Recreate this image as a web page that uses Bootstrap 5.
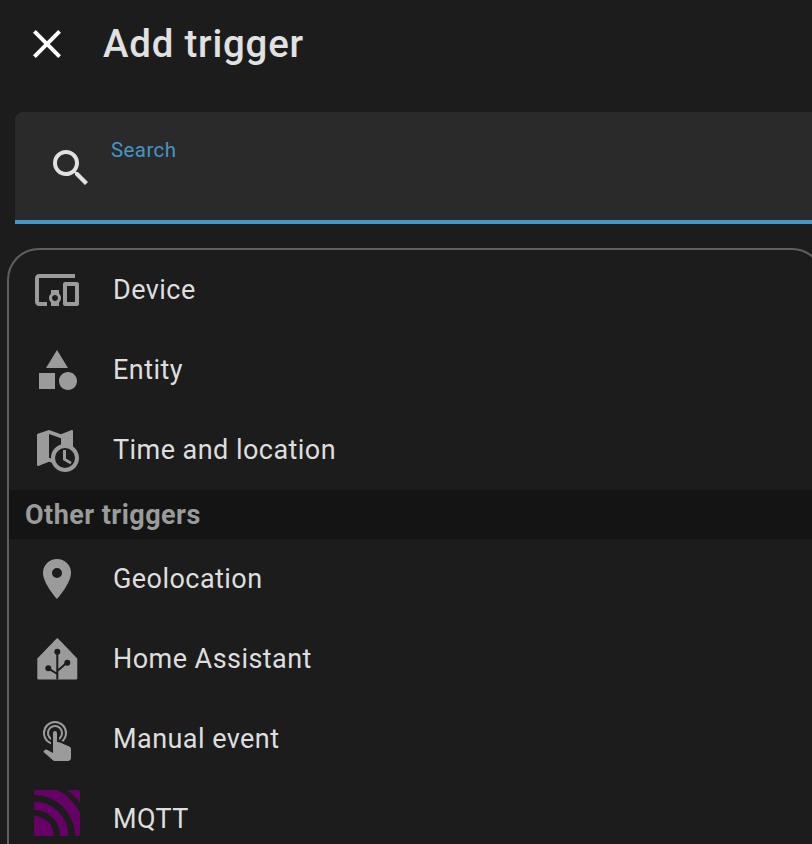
<!DOCTYPE html>
<html lang="en"><head><meta charset="utf-8"><title>Add trigger</title>
<link rel="stylesheet" href="https://cdn.jsdelivr.net/npm/bootstrap@5.3.0/dist/css/bootstrap.min.css">
<style>
html,body{height:844px;overflow:hidden;background:#1c1c1c;font-family:Roboto,"Liberation Sans",sans-serif;color:#e1e1e1}
.dlg-head{height:88px;padding-left:23px;gap:32px}
.dlg-head svg{fill:#fff}
.dlg-title{font-size:38.4px;font-weight:500;color:#e1e1e1;margin:0;line-height:48px;letter-spacing:.8px}
.searchbox{margin:24px -8px 0 15px;height:111.5px;background:#2a2a2a;border-bottom:4px solid #4298cc;border-radius:8px 8px 0 0;padding-left:32px}
.searchbox svg{fill:#e1e1e1;margin-top:32px}
.searchlabel{color:#4596c5;font-size:20.5px;line-height:24px;margin:26px 0 0 16px;letter-spacing:.4px}
.pick-card{margin:24.5px -12px 0 7px;background:#1c1c1c;border:2px solid #5f5f5f;border-radius:32px 32px 0 0;overflow:hidden;height:700px}
.pick-row{background:transparent;border:0;color:#dedede;height:80px;padding:0 0 0 24px;gap:32px;font-size:27px;letter-spacing:.45px}
.pick-row svg{fill:#9b9b9b;flex:none}
.pick-head{background:#141414;color:#9b9b9b;font-size:27px;font-weight:700;height:49px;line-height:49px;padding:1px 0 0 16px;letter-spacing:.45px}
.mqtt-mark{margin-bottom:12px}
.ha-tree{fill:none;stroke:#1c1c1c;stroke-width:2}
.ha-knot{fill:#1c1c1c}
.ha-house{stroke:#9b9b9b;stroke-width:2;stroke-linejoin:round}
</style></head><body>
<header class="dlg-head d-flex align-items-center">
<svg width="48" height="48" viewBox="0 0 24 24"><path d="M19,6.41L17.59,5L12,10.59L6.41,5L5,6.41L10.59,12L5,17.59L6.41,19L12,13.41L17.59,19L19,17.59L13.41,12L19,6.41Z"/></svg>
<h1 class="dlg-title">Add trigger</h1>
</header>
<div class="searchbox d-flex align-items-start">
<svg width="48" height="48" viewBox="0 0 24 24"><path d="M9.5,3A6.5,6.5 0 0,1 16,9.5C16,11.11 15.41,12.59 14.44,13.73L14.71,14H15.5L20.5,19L19,20.5L14,15.5V14.71L13.73,14.44C12.59,15.41 11.11,16 9.5,16A6.5,6.5 0 0,1 3,9.5A6.5,6.5 0 0,1 9.5,3M9.5,5C7,5 5,7 5,9.5C5,12 7,14 9.5,14C12,14 14,12 14,9.5C14,7 12,5 9.5,5Z"/></svg>
<div class="searchlabel">Search</div>
</div>
<div class="card pick-card">
<div class="list-group list-group-flush">
<div class="list-group-item pick-row d-flex align-items-center">
<svg width="48" height="48" viewBox="0 0 24 24"><path d="M3 6H21V4H3C1.9 4 1 4.9 1 6V18C1 19.1 1.9 20 3 20H7V18H3V6M13 12H9V13.78C8.39 14.33 8 15.11 8 16C8 16.89 8.39 17.67 9 18.22V20H13V18.22C13.61 17.67 14 16.88 14 16S13.61 14.33 13 13.78V12M11 17.5C10.17 17.5 9.5 16.83 9.5 16S10.17 14.5 11 14.5 12.5 15.17 12.5 16 11.83 17.5 11 17.5M22 8H16C15.5 8 15 8.5 15 9V19C15 19.5 15.5 20 16 20H22C22.5 20 23 19.5 23 19V9C23 8.5 22.5 8 22 8M21 18H17V10H21V18Z"/></svg>
<span>Device</span></div>
<div class="list-group-item pick-row d-flex align-items-center">
<svg width="48" height="48" viewBox="0 0 24 24"><path d="M11,13.5V21.5H3V13.5H11M12,2L17.5,11H6.5L12,2M17.5,13C20,13 22,15 22,17.5C22,20 20,22 17.5,22C15,22 13,20 13,17.5C13,15 15,13 17.5,13Z"/></svg>
<span>Entity</span></div>
<div class="list-group-item pick-row d-flex align-items-center">
<svg width="48" height="48" viewBox="0 0 24 24"><path d="M15,12H16.5V16.25L19.36,17.94L18.61,19.16L15,17V12M23,16A7,7 0 0,1 16,23C13,23 10.4,21.08 9.42,18.4L8,17.9L2.66,19.97L2.5,20A0.5,0.5 0 0,1 2,19.5V4.38C2,4.15 2.15,3.97 2.36,3.9L8,2L14,4.1L19.34,2H19.5A0.5,0.5 0 0,1 20,2.5V10.25C21.81,11.5 23,13.62 23,16M9,16C9,12.83 11.11,10.15 14,9.29V6.11L8,4V15.89L9,16.24C9,16.16 9,16.08 9,16M16,11A5,5 0 0,0 11,16A5,5 0 0,0 16,21A5,5 0 0,0 21,16A5,5 0 0,0 16,11Z"/></svg>
<span>Time and location</span></div>
<div class="pick-head">Other triggers</div>
<div class="list-group-item pick-row d-flex align-items-center">
<svg width="48" height="48" viewBox="0 0 24 24"><path d="M12,11.5A2.5,2.5 0 0,1 9.5,9A2.5,2.5 0 0,1 12,6.5A2.5,2.5 0 0,1 14.5,9A2.5,2.5 0 0,1 12,11.5M12,2A7,7 0 0,0 5,9C5,14.25 12,22 12,22C12,22 19,14.25 19,9A7,7 0 0,0 12,2Z"/></svg>
<span>Geolocation</span></div>
<div class="list-group-item pick-row d-flex align-items-center">
<svg width="48" height="48" viewBox="0 0 48 48"><path class="ha-house" d="M24.3 4.3 5.3 24V43.6H43.3V24Z"/><path class="ha-tree" d="M24.3 16.7V44.6M15.3 33.3 24.3 39M33.8 27.7 24.3 36"/><circle class="ha-knot" cx="24.3" cy="16.7" r="3"/><circle class="ha-knot" cx="15.3" cy="33.3" r="3"/><circle class="ha-knot" cx="34.3" cy="27.7" r="3"/></svg>
<span>Home Assistant</span></div>
<div class="list-group-item pick-row d-flex align-items-center">
<svg width="48" height="48" viewBox="0 0 24 24"><path d="M10,9A1,1 0 0,1 11,8A1,1 0 0,1 12,9V13.47L13.21,13.6L18.15,15.79C18.68,16.03 19,16.56 19,17.14V21.5C18.97,22.32 18.32,22.97 17.5,23H11C10.62,23 10.26,22.85 10,22.57L5.1,18.37L5.84,17.6C6.03,17.39 6.3,17.28 6.58,17.28H6.8L10,19V9M11,5A4,4 0 0,1 15,9C15,10.5 14.2,11.77 13,12.46V11.24C13.61,10.69 14,9.89 14,9A3,3 0 0,0 11,6A3,3 0 0,0 8,9C8,9.89 8.39,10.69 9,11.24V12.46C7.8,11.77 7,10.5 7,9A4,4 0 0,1 11,5M11,3A6,6 0 0,1 17,9C17,10.7 16.29,12.23 15.16,13.33L14.16,12.88C15.28,11.96 16,10.56 16,9A5,5 0 0,0 11,4A5,5 0 0,0 6,9C6,11.05 7.23,12.81 9,13.58V14.66C6.67,13.83 5,11.61 5,9A6,6 0 0,1 11,3Z"/></svg>
<span>Manual event</span></div>
<div class="list-group-item pick-row d-flex align-items-center">
<svg class="mqtt-mark" width="48" height="48" viewBox="-1 -1 48 48"><rect width="46" height="46" rx="2" fill="#660066"/><g fill="none" stroke="#1c1c1c"><circle cx="0" cy="46" r="23" stroke-width="6"/><circle cx="0" cy="46" r="37.75" stroke-width="6.5"/><circle cx="0" cy="46" r="54" stroke-width="5"/></g></svg>
<span>MQTT</span></div>
</div>
</div>
</body></html>
